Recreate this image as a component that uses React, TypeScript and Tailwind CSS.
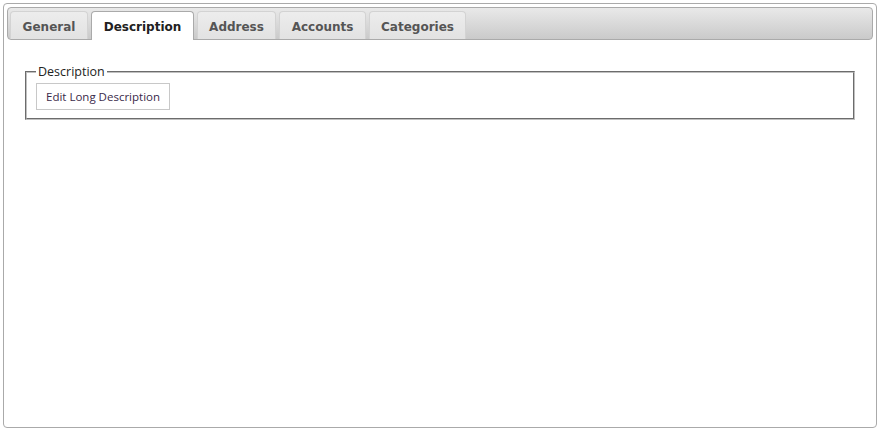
import React from "react";

const tabs = [
  { t: "General", w: "w-[78px]" },
  { t: "Description", w: "w-[103px]" },
  { t: "Address", w: "w-[79px]" },
  { t: "Accounts", w: "w-[87px]" },
  { t: "Categories", w: "w-[97px]" },
];

export default function App() {
  return (
    <div className="w-[879px] h-[429px] bg-white p-[3px]">
      <div className="h-[425px] w-[874px] rounded-[4px] border border-[#aaaaaa] p-[3px] bg-white">
        <div className="h-[33px] rounded-[4px] border border-[#aaaaaa] bg-gradient-to-b from-[#e9e9e9] to-[#cacaca] pl-[2px] pt-[3px] flex items-end gap-[3px]">
          {tabs.map(({ t, w }) => {
            const active = t === "Description";
            return (
              <div
                key={t}
                className={
                  (active
                    ? "h-[29px] mb-[-1px] border-[#aaaaaa] bg-white text-[#212121] "
                    : "h-[28px] border-[#d3d3d3] bg-gradient-to-b from-[#ededed] to-[#e2e2e2] text-[#555555] ") +
                  w +
                  " shrink-0 rounded-t-[4px] border border-b-0 pt-[6px] text-center text-[12px] font-bold [font-family:'DejaVu_Sans',Verdana,sans-serif]"
                }
              >
                {t}
              </div>
            );
          })}
        </div>
        <div className="px-[18px] pt-[24px]">
          <fieldset className="border-2 [border-style:groove] border-[#c0c0c0] px-[9px] pb-[8px] pt-[3px] m-0">
            <legend className="px-[2px] text-[12.5px] leading-[16px] text-[#222] [font-family:'Open_Sans','Noto_Sans',sans-serif]">
              Description
            </legend>
            <button className="block h-[27px] border border-[#c8c8c8] bg-white px-[9px] text-[11.5px] text-[#3a2a4a] [font-family:'Open_Sans','Noto_Sans',sans-serif]">
              Edit Long Description
            </button>
          </fieldset>
        </div>
      </div>
    </div>
  );
}
